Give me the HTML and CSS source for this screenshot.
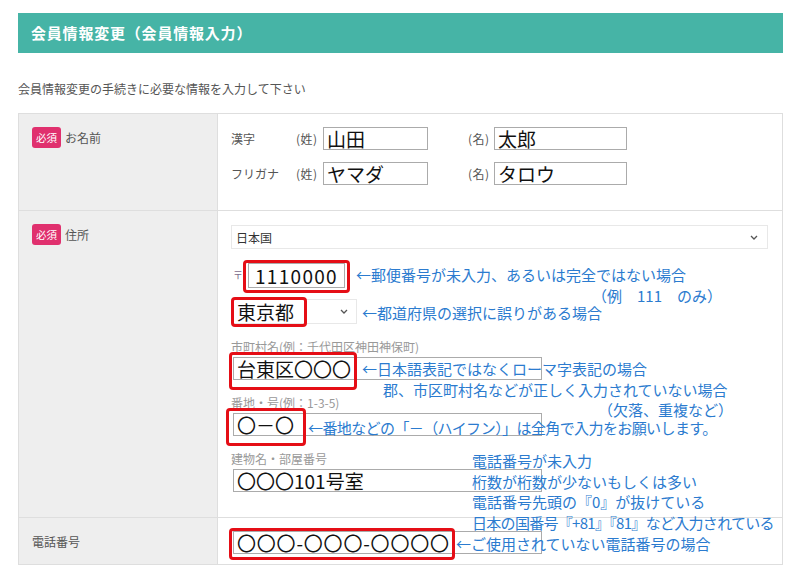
FILE: index.html
```html
<!DOCTYPE html>
<html lang="ja">
<head>
<meta charset="utf-8">
<title>会員情報変更</title>
<link rel="stylesheet" href="styles.css">
</head>
<body>
<div class="page">
  <h1 class="title">会員情報変更（会員情報入力）</h1>
  <p class="lead">会員情報変更の手続きに必要な情報を入力して下さい</p>

  <div class="form">
    <div class="row">
      <div class="th"><span class="req">必須</span><span class="th-label">お名前</span></div>
      <div class="td td-name">
        <div class="name-line">
          <span class="nlabel">漢字</span>
          <span class="paren">(姓)</span><span class="input w-sei">山田</span>
          <span class="paren p-mei">(名)</span><span class="input w-mei">太郎</span>
        </div>
        <div class="name-line">
          <span class="nlabel">フリガナ</span>
          <span class="paren">(姓)</span><span class="input w-sei">ヤマダ</span>
          <span class="paren p-mei">(名)</span><span class="input w-mei">タロウ</span>
        </div>
      </div>
    </div>

    <div class="row">
      <div class="th"><span class="req">必須</span><span class="th-label">住所</span></div>
      <div class="td td-addr">
        <div class="select country"><span>日本国</span><svg class="chev" viewBox="0 0 8 5" width="8" height="5"><path d="M1 1 L4 4 L7 1" fill="none" stroke="#555" stroke-width="1.3"/></svg></div>
        <div class="zip-line"><span class="zip-mark">〒</span><span class="input zip">1110000</span></div>
        <div class="select pref"><span>東京都</span><svg class="chev" viewBox="0 0 8 5" width="8" height="5"><path d="M1 1 L4 4 L7 1" fill="none" stroke="#555" stroke-width="1.3"/></svg></div>
        <div class="field">
          <div class="flabel">市町村名(例：千代田区神田神保町)</div>
          <div class="input wide">台東区〇〇〇</div>
        </div>
        <div class="field">
          <div class="flabel">番地・号(例：1-3-5)</div>
          <div class="input wide">〇－〇</div>
        </div>
        <div class="field">
          <div class="flabel">建物名・部屋番号</div>
          <div class="input wide">〇〇〇101号室</div>
        </div>
      </div>
    </div>

    <div class="row">
      <div class="th th-plain">電話番号</div>
      <div class="td td-tel">
        <div class="input wide tel">〇〇〇-〇〇〇-〇〇〇〇</div>
      </div>
    </div>
  </div>

  <span class="mark m-zip"></span>
  <span class="mark m-pref"></span>
  <span class="mark m-city"></span>
  <span class="mark m-banchi"></span>
  <span class="mark m-tel"></span>

  <p class="note n-a">←郵便番号が未入力、あるいは完全ではない場合</p>
  <p class="note n-b">（例　111　のみ）</p>
  <p class="note n-c">←都道府県の選択に誤りがある場合</p>
  <p class="note n-d">←日本語表記ではなくローマ字表記の場合</p>
  <p class="note n-e">郡、市区町村名などが正しく入力されていない場合</p>
  <p class="note n-f">（欠落、重複など）</p>
  <p class="note n-g">←番地などの「－（ハイフン）」は全角で入力をお願いします。</p>
  <div class="note n-h">
    <p>電話番号が未入力</p>
    <p>桁数が桁数が少ないもしくは多い</p>
    <p>電話番号先頭の『0』が抜けている</p>
    <p class="tight">日本の国番号『+81』『81』など入力されている</p>
  </div>
  <p class="note n-i">←ご使用されていない電話番号の場合</p>
</div>
</body>
</html>
```

FILE: styles.css
```css
* { box-sizing: border-box; }
html, body { margin: 0; padding: 0; background: #fff; }
body {
  font-family: "Noto Sans CJK JP", "Noto Sans", sans-serif;
  color: #444;
  width: 800px;
  height: 569px;
  overflow: hidden;
}
.page {
  position: relative;
  padding: 13px 17px 0 18px;
}
.title {
  margin: 0;
  height: 40px;
  line-height: 40px;
  padding-left: 13px;
  background: #46b4a6;
  color: #fff;
  font-size: 15px;
  font-weight: bold;
  letter-spacing: 0.8px;
}
.lead {
  margin: 27px 0 15px;
  font-size: 12px;
  line-height: 18px;
  color: #555;
}
.form {
  border: 1px solid #dedede;
  border-bottom: none;
}
.row {
  display: grid;
  grid-template-columns: 199px 1fr;
  border-bottom: 1px solid #dedede;
}
.th {
  background: #eeeeee;
  border-right: 1px solid #dedede;
  padding: 13px 0 0 13px;
  display: flex;
  align-items: flex-start;
  font-size: 12px;
  color: #555;
}
.req {
  display: inline-block;
  background: #e0306e;
  color: #fff;
  font-size: 10.5px;
  line-height: 21px;
  height: 21px;
  padding: 0 4px;
  border-radius: 3px;
}
.th-label { margin-left: 4px; line-height: 21px; }
.th-plain { line-height: 23px; padding-top: 12px; }
.td { padding: 13px 14px 0 13px; }
.td-name { padding-bottom: 25px; }
.td-addr { padding-bottom: 25px; padding-top: 14px; }
.td-tel { padding-bottom: 10px; }

.input {
  display: block;
  height: 23px;
  border: 1px solid #ababab;
  background: #fff;
  font-size: 19px;
  line-height: 21px;
  color: #111;
  padding: 0 3px;
  white-space: nowrap;
}
.name-line {
  display: flex;
  align-items: center;
  font-size: 12px;
  color: #555;
}
.name-line + .name-line { margin-top: 12px; }
.nlabel { width: 65px; }
.paren { width: 27px; letter-spacing: 0.5px; }
.p-mei { margin-left: 40px; width: 26px; }
.w-sei { width: 105px; }
.w-mei { width: 133px; }

.select {
  display: flex;
  align-items: center;
  justify-content: space-between;
  border: 1px solid #e8e8e8;
  background: #fff;
  color: #333;
}
.country {
  height: 24px;
  font-size: 12px;
  padding: 0 9px 0 4px;
}
.pref {
  width: 126px;
  height: 25px;
  margin-top: 11px;
  font-size: 19px;
  line-height: 23px;
  color: #111;
  padding: 0 8px 0 5px;
}
.chev { display: block; }
.zip-line {
  display: flex;
  align-items: center;
  margin-top: 14px;
}
.zip-mark {
  width: 17px;
  font-size: 10px;
  color: #7c6b8c;
  padding-left: 2px;
  margin-top: -3px;
}
.zip {
  width: 97px;
  height: 25px;
  line-height: 23px;
  padding-left: 6px;
  letter-spacing: 1.3px;
}
.field { margin-top: 15px; }
.flabel {
  font-size: 12px;
  line-height: 16px;
  color: #999;
  margin-bottom: 2px;
}
.wide { width: 309px; margin-left: 2px; }
.tel { letter-spacing: 0.8px; }

.mark {
  position: absolute;
  border: 3px solid #e50e16;
  border-radius: 4px;
}
.m-zip { left: 243px; top: 260px; width: 107px; height: 33px; }
.m-pref { left: 231px; top: 297px; width: 76px; height: 30px; }
.m-city { left: 229px; top: 352px; width: 128px; height: 38px; }
.m-banchi { left: 226px; top: 408px; width: 80px; height: 38px; }
.m-tel { left: 229px; top: 528px; width: 226px; height: 32px; }

.note {
  position: absolute;
  margin: 0;
  font-size: 15px;
  line-height: 18px;
  color: #2b7bcf;
  white-space: nowrap;
}
.note p { margin: 0; line-height: 20.7px; }
.note .tight { letter-spacing: -0.7px; }
.n-a { left: 356px; top: 266px; }
.n-b { left: 592px; top: 287px; }
.n-c { left: 362px; top: 304px; }
.n-d { left: 362px; top: 360px; }
.n-e { left: 383px; top: 381px; }
.n-f { left: 598px; top: 401px; }
.n-g { left: 308px; top: 419px; letter-spacing: -0.6px; }
.n-h { left: 472px; top: 451px; }
.n-i { left: 456px; top: 535px; }
```
